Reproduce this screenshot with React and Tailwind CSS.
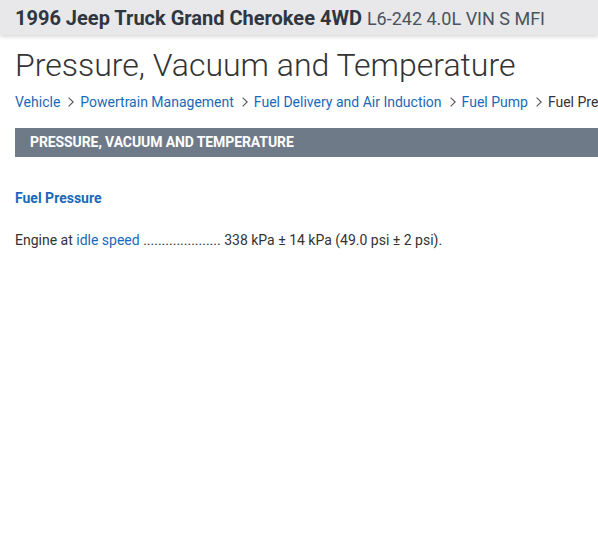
export default function App() {
  const crumbs = ['Vehicle', 'Powertrain Management', 'Fuel Delivery and Air Induction', 'Fuel Pump'];

  const chevron = (
    <svg width="6" height="10" viewBox="0 0 6 10" className="shrink-0 ml-[8px] mr-[6px] text-[#555]">
      <path d="M0.6 0.6L5.2 5L0.6 9.4" fill="none" stroke="currentColor" strokeWidth="1.1" />
    </svg>
  );

  return (
    <div className="min-h-screen bg-white overflow-hidden" style={{ fontFamily: 'Roboto, "Liberation Sans", sans-serif' }}>
      <div className="h-[35px] bg-[#e8e8ea] shadow-[0_2px_4px_rgba(0,0,0,0.15)] flex items-center px-[15px] whitespace-nowrap">
        <span className="text-[20px] font-bold text-[#2e3641]">1996 Jeep Truck Grand Cherokee 4WD</span>
        <span className="text-[18px] text-[#4b5260] ml-[5px] mt-[1px]">L6-242 4.0L VIN S MFI</span>
      </div>

      <div className="px-[15px]">
        <h1 className="mt-[11px] text-[32px] font-light text-[#333] leading-[38px] whitespace-nowrap">
          Pressure, Vacuum and Temperature
        </h1>

        <div className="mt-[8px] flex items-center text-[14px] leading-[20px] whitespace-nowrap">
          {crumbs.map((c, i) => (
            <span key={c} className="flex items-center shrink-0">
              {i > 0 && chevron}
              <span className="text-[#1a69b8]">{c}</span>
            </span>
          ))}
          {chevron}
          <span className="text-[#333] shrink-0">Fuel Pressure</span>
        </div>

        <div className="mt-[16px] -mr-[15px] h-[29px] bg-[#6f7a88] flex items-center pl-[15px]">
          <span className="text-[14px] font-bold text-white tracking-[-0.1px]">PRESSURE, VACUUM AND TEMPERATURE</span>
        </div>

        <div className="mt-[31px] text-[14px] font-bold text-[#1a69b8] leading-[20px]">Fuel Pressure</div>

        <p className="mt-[22px] text-[14px] text-[#333] leading-[20px]">
          Engine at <span className="text-[#1a69b8]">idle speed</span> ..................... 338 kPa ± 14 kPa (49.0 psi ± 2 psi).
        </p>
      </div>
    </div>
  );
}
